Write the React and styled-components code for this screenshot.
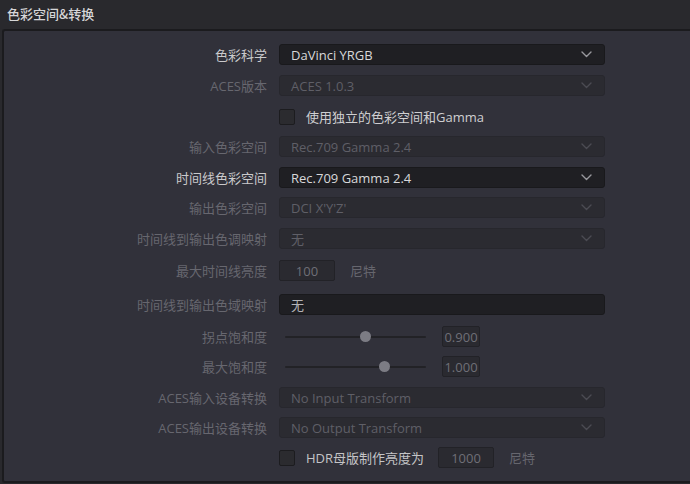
import React from "react";
import styled, { createGlobalStyle } from "styled-components";

const Global = createGlobalStyle`
  html, body { margin: 0; padding: 0; background: #29292d; }
  body {
    width: 690px; height: 484px; overflow: hidden;
    font-family: "Open Sans", "Noto Sans CJK SC", sans-serif;
    -webkit-font-smoothing: antialiased;
  }
`;

const Page = styled.div`
  width: 690px;
  height: 484px;
  display: flex;
  flex-direction: column;
  background: #29292d;
`;

const Header = styled.div`
  height: 29px;
  flex: none;
  display: flex;
  align-items: center;
  padding-left: 7px;
  padding-bottom: 3px;
  box-sizing: border-box;
  font-size: 13px;
  font-weight: 500;
  color: #d6d6d8;
  font-family: "Noto Sans CJK SC", "Open Sans", sans-serif;
`;

const Panel = styled.div`
  margin-left: 2px;
  height: 454px;
  flex: none;
  box-sizing: border-box;
  border: 2px solid #1b1b1e;
  border-right: none;
  border-radius: 3px 0 0 3px;
  background: #31313a;
  padding-top: 13px;
  display: flex;
  flex-direction: column;
`;

const Row = styled.div`
  display: grid;
  grid-template-columns: 263px 326px;
  column-gap: 12px;
  align-items: center;
  height: 21px;
  margin-bottom: ${(p) => p.$mb ?? 10}px;
`;

const Label = styled.div`
  text-align: right;
  font-size: 13px;
  white-space: nowrap;
  color: ${(p) => (p.$active ? "#cacacc" : "#67676f")};
`;

const Select = styled.div`
  height: 21px;
  box-sizing: border-box;
  border-radius: 3px;
  border: 1px solid ${(p) => (p.$active ? "#19191c" : "#27272d")};
  background: ${(p) => (p.$active ? "#1f1f23" : "#2b2b31")};
  display: flex;
  align-items: center;
  justify-content: space-between;
  padding: 0 12px 0 11px;
  font-size: 13px;
  color: ${(p) => (p.$active ? "#d8d8da" : "#5f5f67")};
  & svg { color: ${(p) => (p.$active ? "#98989d" : "#4b4b53")}; }
`;

const Inline = styled.div`
  display: flex;
  align-items: center;
  gap: ${(p) => p.$gap ?? 11}px;
`;

const Check = styled.div`
  width: 16px;
  height: 16px;
  box-sizing: border-box;
  border: 1px solid #1c1c1f;
  background: #2b2b2f;
  border-radius: 2px;
  flex: none;
`;

const CheckText = styled.span`
  font-size: 13px;
  color: ${(p) => p.$color || "#cfcfd1"};
`;

const NumBox = styled.div`
  width: ${(p) => p.$w}px;
  height: 21px;
  box-sizing: border-box;
  border: 1px solid #222227;
  border-radius: 2px;
  background: #2a2a30;
  display: flex;
  align-items: center;
  justify-content: center;
  font-size: 13px;
  color: #6f6f77;
  flex: none;
  margin-left: ${(p) => p.$ml ?? 0}px;
`;

const Unit = styled.span`
  font-size: 13px;
  color: #66666e;
  margin-left: ${(p) => p.$ml ?? 0}px;
`;

const SliderWrap = styled.div`
  position: relative;
  width: 141px;
  margin-left: 6px;
  height: 12px;
  display: flex;
  align-items: center;
  flex: none;
`;

const Track = styled.div`
  width: 100%;
  height: 2px;
  background: #222226;
  border-radius: 1px;
`;

const Knob = styled.div`
  position: absolute;
  top: 0;
  width: 11px;
  height: 11px;
  margin-left: -5px;
  border-radius: 50%;
  background: #7c7c84;
`;

const PlainValue = styled.span`
  color: #b4b4b8;
`;

const Chevron = () => (
  <svg width="11" height="7" viewBox="0 0 11 7" fill="none">
    <path d="M1 1l4.5 4.5L10 1" stroke="currentColor" strokeWidth="1.4" strokeLinecap="round" strokeLinejoin="round" />
  </svg>
);

const Slider = ({ pos, value }) => (
  <Inline $gap={16}>
    <SliderWrap>
      <Track />
      <Knob style={{ left: `${pos}px` }} />
    </SliderWrap>
    <NumBox $w={38}>{value}</NumBox>
  </Inline>
);

const SelectRow = ({ label, value, active, labelActive, chevron = true, mb }) => (
  <Row $mb={mb}>
    <Label $active={labelActive}>{label}</Label>
    <Select $active={active}>
      <span>{value}</span>
      {chevron && <Chevron />}
    </Select>
  </Row>
);

export default function App() {
  return (
    <Page>
      <Global />
      <Header>色彩空间&amp;转换</Header>
      <Panel>
        <SelectRow label="色彩科学" value="DaVinci YRGB" active labelActive />
        <SelectRow label="ACES版本" value="ACES 1.0.3" />
        <Row $mb={9}>
          <div />
          <Inline>
            <Check />
            <CheckText>使用独立的色彩空间和Gamma</CheckText>
          </Inline>
        </Row>
        <SelectRow label="输入色彩空间" value="Rec.709 Gamma 2.4" />
        <SelectRow label="时间线色彩空间" value="Rec.709 Gamma 2.4" active labelActive mb={9} />
        <SelectRow label="输出色彩空间" value="DCI X'Y'Z'" />
        <SelectRow label="时间线到输出色调映射" value="无" mb={11} />
        <Row $mb={13}>
          <Label>最大时间线亮度</Label>
          <Inline $gap={15}>
            <NumBox $w={56}>100</NumBox>
            <Unit>尼特</Unit>
          </Inline>
        </Row>
        <Row $mb={11}>
          <Label>时间线到输出色域映射</Label>
          <Select $active>
            <PlainValue>无</PlainValue>
          </Select>
        </Row>
        <Row $mb={9}>
          <Label>拐点饱和度</Label>
          <Slider pos={80} value="0.900" />
        </Row>
        <Row>
          <Label>最大饱和度</Label>
          <Slider pos={99} value="1.000" />
        </Row>
        <SelectRow label="ACES输入设备转换" value="No Input Transform" mb={9} />
        <SelectRow label="ACES输出设备转换" value="No Output Transform" mb={9} />
        <Row>
          <div />
          <Inline $gap={11}>
            <Check />
            <CheckText $color="#c4c4c6">HDR母版制作亮度为</CheckText>
            <NumBox $w={56} $ml={3}>1000</NumBox>
            <Unit $ml={4}>尼特</Unit>
          </Inline>
        </Row>
      </Panel>
    </Page>
  );
}
